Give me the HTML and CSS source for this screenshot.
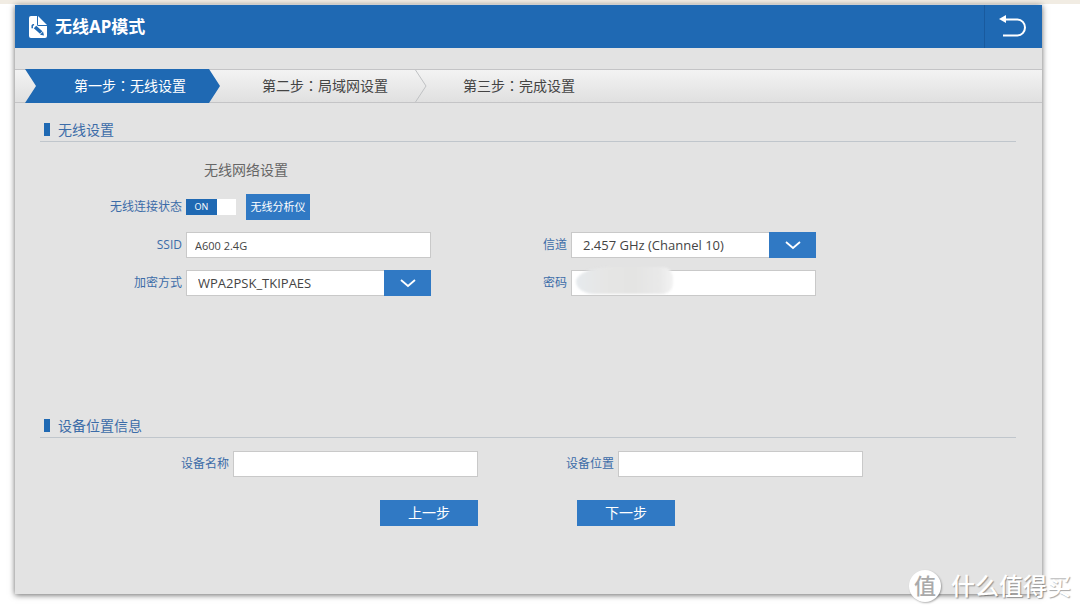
FILE: index.html
```html
<!DOCTYPE html>
<html lang="zh-CN">
<head>
<meta charset="utf-8">
<meta name="viewport" content="width=device-width, initial-scale=1">
<title>无线AP模式</title>
<link rel="stylesheet" href="styles.css">
</head>
<body>
<main class="panel">
  <header class="topbar">
    <svg class="topbar-icon" width="18" height="22" viewBox="0 0 18 22" aria-hidden="true">
      <path fill="#fff" d="M2 0H8V8.500a1.500 1.500 0 0 0 1.500 1.500H18V20a2 2 0 0 1-2 2H2a2 2 0 0 1-2-2V2a2 2 0 0 1 2-2Z"/>
      <path fill="#fff" d="M9 0 18 9H9Z"/>
      <path d="M6 11 12.200 16.500" stroke="#1f69b3" stroke-width="3.600"/>
      <path d="M3.200 12.200V10.500a1.500 1.500 0 0 1 1.800-1.800" stroke="#1f69b3" stroke-width="1.500" fill="none"/>
      <path fill="#1f69b3" d="m14 15.500 1 4-4-.7Z"/>
    </svg>
    <h1 class="topbar-title">无线AP模式</h1>
    <button class="back" type="button" aria-label="返回">
      <svg width="28" height="24" viewBox="0 0 28 24" aria-hidden="true">
        <path d="M6 5.500H18.500a7.500 8 0 0 1 0 16H4" fill="none" stroke="#fff" stroke-width="2"/>
        <path d="M0 5 7 1V9Z" fill="#fff"/>
      </svg>
    </button>
  </header>

  <ol class="steps">
    <li class="step step-current" aria-current="step">第一步<span class="colon" lang="zh-TW">：</span>无线设置</li>
    <li class="step step-next">第二步<span class="colon" lang="zh-TW">：</span>局域网设置</li>
    <li class="step-divider" aria-hidden="true">
      <svg width="12" height="32" viewBox="0 0 12 32"><path d="M.5 0 11 16 .5 32" fill="none" stroke="#bfc1c3"/></svg>
    </li>
    <li class="step step-last">第三步<span class="colon" lang="zh-TW">：</span>完成设置</li>
  </ol>

  <form>
    <section class="section wireless">
      <h2 class="section-title">无线设置</h2>
      <h3 class="subtitle">无线网络设置</h3>
      <div class="fields">
        <label class="label" for="status">无线连接状态</label>
        <div class="status">
          <label class="switch">
            <input class="switch-input" id="status" type="checkbox" checked>
            <span class="switch-on">ON</span>
          </label>
          <button class="button analyzer" type="button">无线分析仪</button>
        </div>

        <label class="label label-first" for="ssid">SSID</label>
        <input class="input" id="ssid" type="text" value="A600 2.4G">
        <label class="label" for="channel">信道</label>
        <div class="dropdown">
          <select class="select" id="channel"><option>2.457 GHz (Channel 10)</option></select>
          <svg class="arrow" viewBox="0 0 47 26" aria-hidden="true"><path d="m17 10 7 6 7-6" fill="none" stroke="#fff" stroke-width="1.800"/></svg>
        </div>

        <label class="label" for="security">加密方式</label>
        <div class="dropdown">
          <select class="select" id="security"><option>WPA2PSK_TKIPAES</option></select>
          <svg class="arrow" viewBox="0 0 47 26" aria-hidden="true"><path d="m17 10 7 6 7-6" fill="none" stroke="#fff" stroke-width="1.800"/></svg>
        </div>
        <label class="label" for="password">密码</label>
        <div class="masked">
          <input class="input" id="password" type="text">
          <span class="smudge"></span>
        </div>
      </div>
    </section>

    <section class="section">
      <h2 class="section-title">设备位置信息</h2>
      <div class="fields fields-device">
        <label class="label" for="device-name">设备名称</label>
        <input class="input" id="device-name" type="text">
        <label class="label" for="device-place">设备位置</label>
        <input class="input" id="device-place" type="text">
      </div>
    </section>

    <div class="actions">
      <button class="button action" type="button">上一步</button>
      <button class="button action" type="submit">下一步</button>
    </div>
  </form>
</main>

<div class="watermark"><span class="watermark-logo">值</span><span class="watermark-text">什么值得买</span></div>
</body>
</html>
```
FILE: styles.css
```css
* { box-sizing: border-box; }

body {
  margin: 0;
  padding: 5px 38px 18px 15px;
  background: linear-gradient(#f1ece3, #f1ece3) 0 0 / 100% 4px no-repeat #fff;
  color: #444;
  font: 12px/16px "Open Sans", "Noto Sans CJK SC", sans-serif;
}

h1, h2, h3, ol { margin: 0; padding: 0; font-weight: 400; }
button, input, select { font: inherit; border-radius: 0; }

.panel {
  padding-bottom: 68px;
  background: #e3e3e3;
  box-shadow: 0 1px 6px rgba(0, 0, 0, .6);
}

/* Header */
.topbar {
  display: flex;
  align-items: center;
  height: 43px;
  padding-left: 14px;
  background: #1f69b3;
  color: #fff;
}
.topbar-title {
  margin-left: 8px;
  font: 700 17px/24px "Noto Sans", "Noto Sans CJK SC", sans-serif;
}
.back {
  align-self: stretch;
  width: 58px;
  margin-left: auto;
  padding: 0 2px 2px 0;
  border: 0;
  border-left: 1px solid #195a9e;
  background: none;
}
.back svg { display: block; margin: 0 auto; }

/* Wizard steps */
.steps {
  display: flex;
  height: 34px;
  margin-top: 21px;
  padding-left: 10px;
  border: solid #c4c4c6;
  border-width: 1px 0;
  background: linear-gradient(#f3f3f3, #e0e0e0);
  font-size: 14px;
  line-height: 30px;
  list-style: none;
}
.colon { font-family: "Noto Sans CJK TC", sans-serif; }
.step-current {
  width: 195px;
  margin: -1px 0;
  padding: 1px 0 0 49px;
  background: #1f69b3;
  color: #fff;
  clip-path: polygon(0 0, 184px 0, 100% 50%, 184px 100%, 0 100%, 11px 50%);
}
.step-next { width: 195px; padding-left: 42px; }
.step-divider svg { display: block; }
.step-last { padding-left: 36px; }

/* Sections */
.section { padding: 15px 26px 0 25px; }
.wireless { padding-bottom: 103px; }
.section-title {
  display: flex;
  align-items: center;
  gap: 8px;
  height: 24px;
  padding-left: 4px;
  border-bottom: 1px solid #c0c6cc;
  color: #3c6ca8;
  font-size: 14px;
}
.section-title::before {
  content: "";
  width: 6px;
  height: 13px;
  background: #1f69b3;
}
.subtitle {
  margin: 18px 0 14px 164px;
  color: #666;
  font-size: 14px;
  line-height: 20px;
}

/* Fields */
.fields {
  display: grid;
  grid-template-columns: 142px 245px 132px 245px;
  gap: 12px 4px;
}
.fields-device {
  grid-template-columns: 189px 245px 132px 245px;
  margin-top: 13px;
}
.label {
  color: #3c6ca8;
  line-height: 26px;
  text-align: right;
}
.label-first { grid-column: 1; }
.input, .select {
  width: 100%;
  height: 26px;
  border: 1px solid #c9c9c9;
  background: #fff;
  color: #444;
  outline: 0;
}
.input { padding: 0 8px; font-size: 11px; }
.select {
  grid-area: 1 / 1;
  padding: 0 50px 0 11px;
  font-size: 13px;
  appearance: none;
}
.dropdown { display: grid; justify-items: end; }
.arrow {
  grid-area: 1 / 1;
  width: 47px;
  height: 26px;
  background: #3079c4;
  pointer-events: none;
}

.status { display: flex; align-items: center; gap: 10px; }
.switch {
  display: flex;
  width: 50px;
  height: 16px;
  background: #fff;
}
.switch-input { position: absolute; margin: 0; opacity: 0; }
.switch-on {
  width: 31px;
  background: #1f69b3;
  color: #fff;
  font-size: 9px;
  text-align: center;
}

.masked { position: relative; }
.smudge {
  position: absolute;
  top: -3px;
  left: 5px;
  width: 97px;
  height: 27px;
  border-radius: 40px 12px 12px 20px / 16px 12px 12px 14px;
  background: linear-gradient(90deg, #e6eaed, #e6e6e5 30%, #e4e4e3 60%, #e9e9e9 87%, #f3f3f3);
  filter: blur(1px);
}

/* Buttons */
.button {
  height: 26px;
  padding: 0;
  border: 0;
  background: #3079c4;
  color: #fff;
}
.analyzer { width: 64px; font-size: 11px; }
.actions {
  display: flex;
  gap: 99px;
  margin-top: 23px;
  padding-left: 365px;
}
.action { width: 98px; font-size: 14px; }

/* Watermark over the lower right corner */
.watermark {
  position: absolute;
  top: 570px;
  right: 9px;
  display: flex;
  align-items: center;
  gap: 10px;
  color: #fff;
  text-shadow: 1px 1px 1px rgba(0, 0, 0, .35);
}
.watermark-logo {
  width: 32px;
  height: 32px;
  border-radius: 50%;
  background: #fff;
  box-shadow: 1px 1px 2px rgba(0, 0, 0, .3);
  color: #aaa;
  font-size: 22px;
  font-weight: 500;
  line-height: 31px;
  text-align: center;
  text-shadow: none;
}
.watermark-text { font-size: 24px; font-weight: 500; line-height: 32px; }
```
